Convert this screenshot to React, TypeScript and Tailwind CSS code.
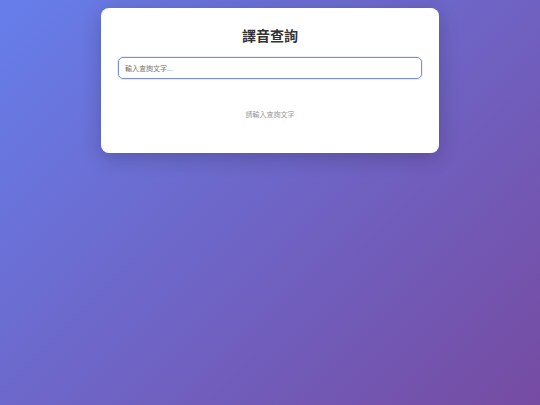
export default function App() {
  return (
    <div
      className="min-h-[405px] w-full bg-[linear-gradient(135deg,#667eea_0%,#764ba2_100%)] pt-2"
      style={{ fontFamily: '"Liberation Sans", "Noto Sans CJK TC", sans-serif' }}
    >
      <div className="mx-auto w-[338px] rounded-lg bg-white px-[17px] pb-[33px] pt-[18px] shadow-[0_5px_20px_rgba(0,0,0,0.2)]">
        <h1 className="text-center text-[14px] font-bold leading-5 text-[#333]">譯音查詢</h1>
        <input
          autoFocus
          type="text"
          placeholder="輸入查詢文字..."
          className="mt-[11px] block h-[22px] w-full rounded-[5px] border border-[#7a8de0] px-[6px] text-[7px] text-[#333] shadow-[0_0_0_1px_rgba(102,126,234,0.15)] outline-none placeholder:text-[#757575]"
        />
        <p className="mt-[31px] text-center text-[7px] leading-[10px] text-[#999]">請輸入查詢文字</p>
      </div>
    </div>
  );
}
